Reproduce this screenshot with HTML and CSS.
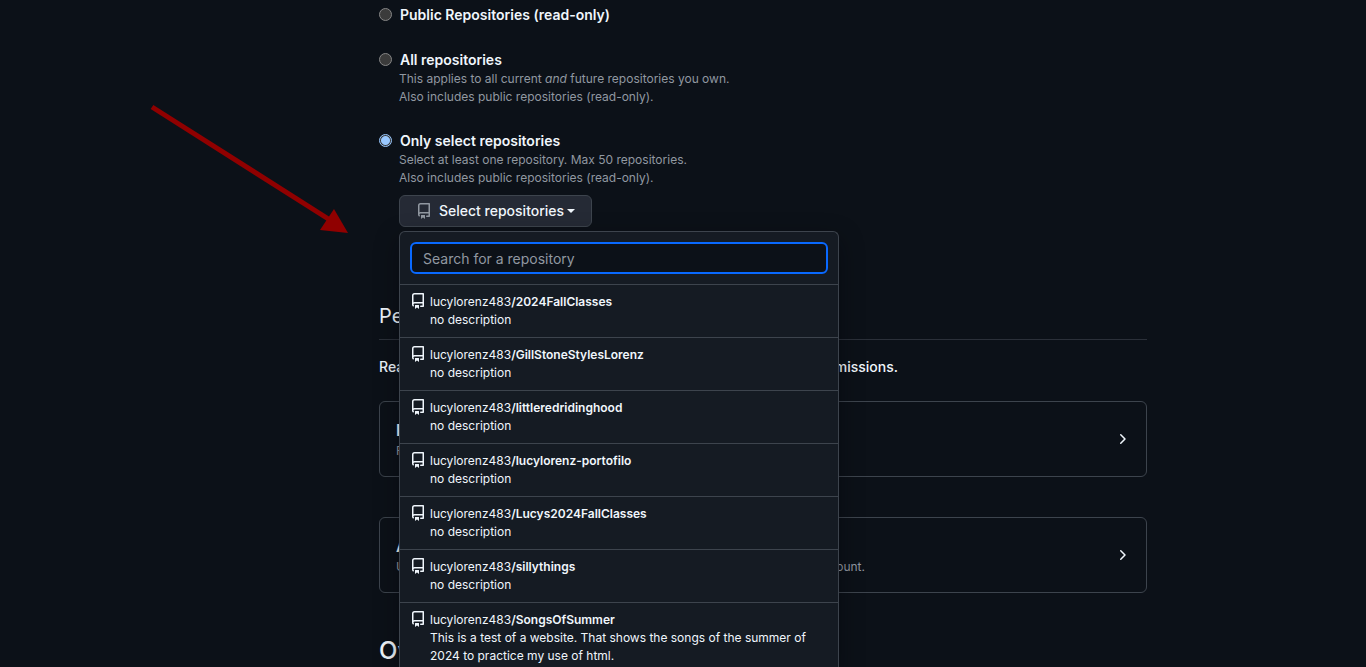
FILE: index.html
```html
<!DOCTYPE html>
<html lang="en">
<head>
<meta charset="utf-8">
<title>Repository access</title>
<link rel="stylesheet" href="styles.css">
</head>
<body>
<svg class="defs" aria-hidden="true">
  <symbol id="repo" viewBox="0 0 16 16"><path d="M2 2.5A2.5 2.5 0 0 1 4.5 0h8.75a.75.75 0 0 1 .75.75v12.5a.75.75 0 0 1-.75.75h-2.5a.75.75 0 0 1 0-1.5h1.75v-2h-8a1 1 0 0 0-.714 1.7.75.75 0 1 1-1.072 1.05A2.495 2.495 0 0 1 2 11.5Zm10.5-1h-8a1 1 0 0 0-1 1v6.708A2.486 2.486 0 0 1 4.5 9h8ZM5 12.25a.25.25 0 0 1 .25-.25h3.5a.25.25 0 0 1 .25.25v3.25a.25.25 0 0 1-.4.2l-1.45-1.087a.249.249 0 0 0-.3 0L5.4 15.7a.25.25 0 0 1-.4-.2Z"/></symbol>
  <symbol id="chevron" viewBox="0 0 16 16"><path d="M6.22 3.22a.75.75 0 0 1 1.06 0l4.25 4.25a.75.75 0 0 1 0 1.06l-4.25 4.25a.751.751 0 0 1-1.042-.018.751.751 0 0 1-.018-1.042L9.94 8 6.22 4.28a.75.75 0 0 1 0-1.06Z"/></symbol>
</svg>
<main class="page">
  <form class="access">
    <div class="option">
      <input class="radio" type="radio" name="access" id="public">
      <div class="option-text"><label class="label" for="public">Public Repositories (read-only)</label></div>
    </div>
    <div class="option">
      <input class="radio" type="radio" name="access" id="all">
      <div class="option-text">
        <label class="label" for="all">All repositories</label>
        <p class="note">This applies to all current <em>and</em> future repositories you own.<br>Also includes public repositories (read-only).</p>
      </div>
    </div>
    <div class="option">
      <input class="radio" type="radio" name="access" id="selected" checked>
      <div class="option-text">
        <label class="label" for="selected">Only select repositories</label>
        <p class="note">Select at least one repository. Max 50 repositories.<br>Also includes public repositories (read-only).</p>
        <div class="picker">
          <button class="picker-button" type="button" aria-expanded="true">
            <svg class="icon icon-muted"><use href="#repo"/></svg>
            <span>Select repositories</span><span class="caret"></span>
          </button>
          <div class="menu">
            <div class="search"><input class="search-input" type="text" placeholder="Search for a repository" aria-label="Search for a repository"></div>
            <ul class="repos">
              <li><button class="repo" type="button"><svg class="icon"><use href="#repo"/></svg><span>lucylorenz483<b>/2024FallClasses</b><br>no description</span></button></li>
              <li><button class="repo" type="button"><svg class="icon"><use href="#repo"/></svg><span>lucylorenz483<b>/GillStoneStylesLorenz</b><br>no description</span></button></li>
              <li><button class="repo" type="button"><svg class="icon"><use href="#repo"/></svg><span>lucylorenz483<b>/littleredridinghood</b><br>no description</span></button></li>
              <li><button class="repo" type="button"><svg class="icon"><use href="#repo"/></svg><span>lucylorenz483<b>/lucylorenz-portofilo</b><br>no description</span></button></li>
              <li><button class="repo" type="button"><svg class="icon"><use href="#repo"/></svg><span>lucylorenz483<b>/Lucys2024FallClasses</b><br>no description</span></button></li>
              <li><button class="repo" type="button"><svg class="icon"><use href="#repo"/></svg><span>lucylorenz483<b>/sillythings</b><br>no description</span></button></li>
              <li><button class="repo" type="button"><svg class="icon"><use href="#repo"/></svg><span>lucylorenz483<b>/SongsOfSummer</b><br>This is a test of a website. That shows the songs of the summer of 2024 to practice my use of html.</span></button></li>
            </ul>
          </div>
        </div>
      </div>
    </div>
  </form>
  <section class="permissions">
    <h2 class="heading">Permissions</h2>
    <p class="intro">Read our permissions documentation for information on specific permissions.</p>
    <button class="card" type="button">
      <span><span class="card-title">Repository permissions</span><span class="card-note">Repository permissions permit access to repositories and settings.</span></span>
      <svg class="icon"><use href="#chevron"/></svg>
    </button>
    <button class="card" type="button">
      <span><span class="card-title">Account permissions</span><span class="card-note">User permissions permit access to resources under your personal GitHub account.</span></span>
      <svg class="icon"><use href="#chevron"/></svg>
    </button>
  </section>
  <h2 class="overview">Overview</h2>
</main>
<svg class="arrow" viewBox="0 0 200 132" aria-hidden="true"><path d="M2 3 180 116" stroke="#900000" stroke-width="5"/><path d="M184 105 198 129 170 126Z"/></svg>
</body>
</html>
```
FILE: styles.css
```css
* { box-sizing: border-box; }
body { margin: 0; background: #0c1118; color: #f0f6fc; font: 14px/21px Inter, "Liberation Sans", sans-serif; }
button, input { font: inherit; color: inherit; }
p, h2, ul { margin: 0; padding: 0; }
.defs { display: none; }
.page { max-width: 1147px; padding: 4px 0 0 379px; }
.access { display: flex; flex-direction: column; gap: 24px; }
.option { display: flex; gap: 7px; }
.radio { appearance: none; flex: none; width: 13px; height: 13px; margin: 4px 0 0; border: 1px solid #858585; border-radius: 50%; background: #3b3b3b; }
.radio:checked { border-color: #99c8ff; background: radial-gradient(circle, #99c8ff 0 4px, #3b3b3b 5px); }
.label { display: block; padding-left: 1px; font-weight: 600; }
.note { color: #9198a1; font-size: 12px; line-height: 18px; }
.picker { position: relative; margin-top: 8px; }
.picker-button { display: flex; align-items: center; gap: 7px; height: 32px; padding: 0 16px; border: 1px solid #3d444d; border-radius: 6px; background: #252a35; font-weight: 500; line-height: 20px; }
.icon { flex: none; width: 16px; height: 16px; fill: currentColor; }
.icon-muted { color: #9198a1; }
.caret { margin-left: -4px; border: 4px solid transparent; border-top-color: currentColor; border-bottom: 0; }
.menu { position: absolute; z-index: 1; top: 36px; left: 0; width: 440px; border: 1px solid #3d444d; border-bottom: 0; border-radius: 6px 6px 0 0; background: #151b23; box-shadow: 0 8px 24px rgba(1, 4, 9, .4); }
.search { padding: 10px; }
.search-input { display: block; width: 100%; height: 32px; padding: 0 11px; border: 2px solid #0969ff; border-radius: 6px; outline: 0; background: #0c1118; line-height: 20px; }
.search-input::placeholder { color: #9198a1; opacity: 1; }
.repos { list-style: none; }
.repo { display: flex; gap: 4px; width: 100%; padding: 8px 10px; border: 0; border-top: 1px solid #3d444d; background: transparent; text-align: left; font-size: 12px; line-height: 18px; }
.repo b { font-weight: 600; }
.permissions { margin-top: 74px; }
.heading { padding-bottom: 8px; border-bottom: 1px solid #2b3039; font-size: 20px; line-height: 30px; font-weight: 400; }
.intro { margin: 16px 0 24px; font-weight: 500; }
.card { display: flex; align-items: center; justify-content: space-between; width: 100%; margin-bottom: 40px; padding: 16px; border: 1px solid #3d444d; border-radius: 6px; background: transparent; text-align: left; }
.card-title, .card-note { display: block; }
.card-title { font-size: 16px; line-height: 24px; font-weight: 600; }
.card-note { color: #9198a1; font-size: 12px; line-height: 18px; }
.overview { font-size: 24px; line-height: 36px; font-weight: 500; }
.arrow { position: absolute; top: 104px; left: 150px; width: 200px; height: 132px; fill: #900000; }
```
